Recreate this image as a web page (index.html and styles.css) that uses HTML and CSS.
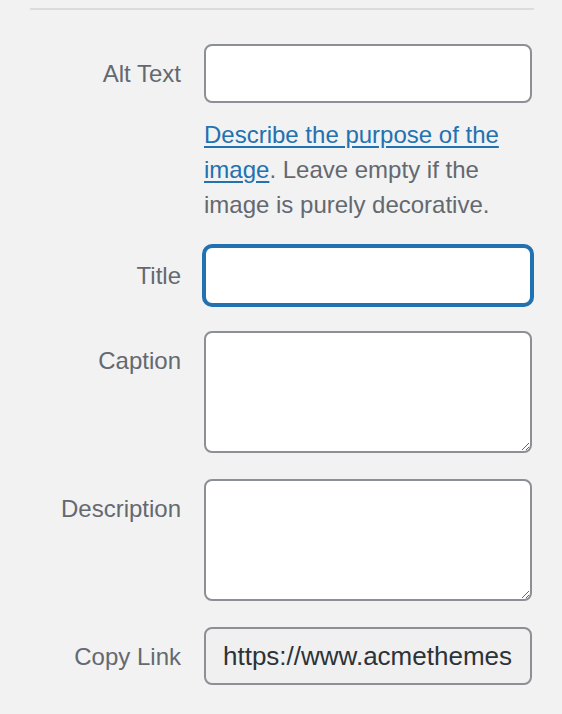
FILE: index.html
```html
<!DOCTYPE html>
<html lang="en">
<head>
<meta charset="utf-8">
<title>Attachment details</title>
<link rel="stylesheet" href="styles.css">
</head>
<body>
<div class="panel">
  <div class="divider"></div>

  <div class="setting setting-alt">
    <label class="name" for="alt">Alt Text</label>
    <div class="field">
      <input class="text-input" id="alt" type="text">
      <p class="description"><a href="#" class="help-link">Describe the purpose of the image</a>. Leave empty if the image is purely decorative.</p>
    </div>
  </div>

  <div class="setting setting-title">
    <label class="name" for="title">Title</label>
    <div class="field">
      <input class="text-input is-focus" id="title" type="text">
    </div>
  </div>

  <div class="setting">
    <label class="name" for="caption">Caption</label>
    <div class="field">
      <textarea class="text-area" id="caption"></textarea>
    </div>
  </div>

  <div class="setting">
    <label class="name" for="description">Description</label>
    <div class="field">
      <textarea class="text-area" id="description"></textarea>
    </div>
  </div>

  <div class="setting">
    <label class="name" for="copy">Copy Link</label>
    <div class="field">
      <input class="text-input is-readonly" id="copy" type="text" readonly value="https://www.acmethemes.com/wp-content/uploads/2021/05/image.jpg">
    </div>
  </div>
</div>
</body>
</html>
```

FILE: styles.css
```css
* {
  box-sizing: border-box;
}

html, body {
  margin: 0;
  padding: 0;
  background: #f2f2f2;
}

body {
  font-family: "Liberation Sans", Arial, sans-serif;
  color: #646970;
  width: 562px;
  height: 714px;
  overflow: hidden;
}

.panel {
  padding: 8px 28px 0 28px;
}

.divider {
  height: 2px;
  margin-left: 2px;
  background: #dcdcde;
}

.setting {
  display: flex;
  align-items: flex-start;
  margin-top: 26px;
}

.setting-alt {
  margin-top: 34px;
}

.setting-title {
  margin-top: 24px;
}

.name {
  flex: 0 0 176px;
  padding-right: 23px;
  text-align: right;
  font-size: 24px;
  line-height: 59px;
  color: #646970;
}

.field {
  flex: 0 0 328px;
  width: 328px;
}

.text-input,
.text-area {
  display: block;
  width: 100%;
  margin: 0;
  border: 2px solid #8c8f94;
  border-radius: 8px;
  background: #fff;
  font-family: "Liberation Sans", Arial, sans-serif;
  font-size: 26px;
  color: #2c3338;
  outline: none;
}

.text-input {
  height: 59px;
  padding: 0 18px 0 17px;
}

.text-area {
  height: 122px;
  padding: 8px 16px;
  resize: vertical;
}

.is-focus {
  border-color: #2271b1;
  box-shadow: 0 0 0 2px #2271b1;
}

.is-readonly {
  background: #f0f0f1;
  height: 58px;
}

.description {
  margin: 14px 0 0;
  font-size: 24px;
  line-height: 35px;
  color: #646970;
}

.help-link {
  color: #2271b1;
  text-decoration: underline;
  text-underline-offset: 3px;
}
```
